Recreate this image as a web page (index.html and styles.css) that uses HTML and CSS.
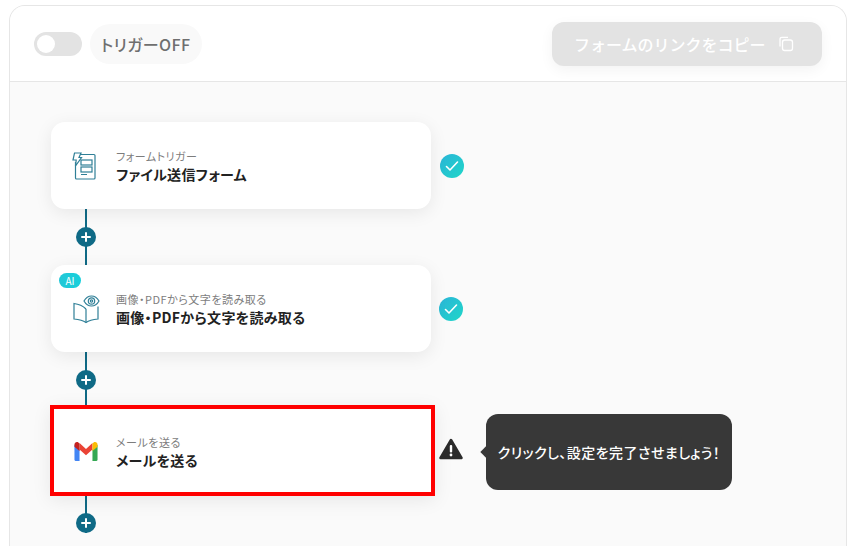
FILE: index.html
```html
<!DOCTYPE html>
<html lang="ja">
<head>
<meta charset="utf-8"/>
<meta content="width=device-width, initial-scale=1.0" name="viewport"/>
<title>フロー</title>
<link rel="stylesheet" href="styles.css">
</head>
<body>
<div class="panel">
  <div class="panel-head">
    <div class="trigger">
      <span class="switch"><span class="knob"></span></span>
      <span class="trigger-label">トリガーOFF</span>
    </div>
    <button class="copy-btn">フォームのリンクをコピー
      <svg width="16" height="16" viewBox="0 0 16 16" fill="none" stroke="#fff" stroke-width="1.3">
        <rect x="4.5" y="4" width="10" height="10.5" rx="2.2"/>
        <path d="M2 10.5V3.2C2 2 2.8 1.3 3.9 1.3H10"/>
      </svg>
    </button>
  </div>
  <div class="flow">
    <div class="step-row">
      <div class="card">
        <svg class="step-icon" width="26" height="28" viewBox="0 0 26 28" fill="none" stroke="#2f7f97" stroke-width="1.2">
          <path d="M8 2.500H22a1 1 0 0 1 1 1V26a1 1 0 0 1-1 1H4.500a1 1 0 0 1-1-1V10"/>
          <path d="M2.500 1H9L7 5.500H9.500L3.500 14L4.200 8H1Z" fill="#fff"/>
          <rect x="9" y="8" width="11" height="5"/>
          <rect x="9" y="15" width="11" height="5"/>
          <path d="M9 22.500H15"/>
        </svg>
        <div class="step-text">
          <div class="step-kind">フォームトリガー</div>
          <div class="step-name">ファイル送信フォーム</div>
        </div>
      </div>
      <span class="check">
        <svg width="14" height="12" viewBox="0 0 14 12" fill="none" stroke="#fff" stroke-width="1.6" stroke-linecap="round" stroke-linejoin="round"><path d="M1.500 6.500L5 10L12.500 2"/></svg>
      </span>
    </div>
    <div class="link"><span class="plus"></span></div>
    <div class="step-row">
      <div class="card">
        <span class="ai-badge">AI</span>
        <svg class="step-icon step-icon-wide" width="28" height="30" viewBox="0 0 28 30" fill="none" stroke="#2f7f97" stroke-width="1.2">
          <path d="M14 15C11 12 6.500 10 2 9.500V25C6.500 25.500 11 26.500 14 28.500C17 26.500 21.500 25.500 26 25V12.500"/>
          <path d="M14 15V28.500"/>
          <path d="M12 7C13.800 3.800 16.500 2 19.500 2S25.200 3.800 27 7C25.200 10.200 22.500 12 19.500 12S13.800 10.200 12 7Z" fill="#fff"/>
          <circle cx="19.500" cy="7" r="3.200"/>
          <circle cx="19.500" cy="7" r="1.200"/>
        </svg>
        <div class="step-text">
          <div class="step-kind">画像・PDFから文字を読み取る</div>
          <div class="step-name">画像・PDFから文字を読み取る</div>
        </div>
      </div>
      <span class="check check-ai">
        <svg width="14" height="12" viewBox="0 0 14 12" fill="none" stroke="#fff" stroke-width="1.6" stroke-linecap="round" stroke-linejoin="round"><path d="M1.500 6.500L5 10L12.500 2"/></svg>
      </span>
    </div>
    <div class="link"><span class="plus"></span></div>
    <div class="step-row">
      <div class="card card-alert">
        <svg class="step-icon step-icon-gmail" width="24" height="21" viewBox="0 0 26 20" preserveAspectRatio="none">
          <path d="M0.500 3.500V17.500a1.500 1.500 0 0 0 1.500 1.500H6V8Z" fill="#4285f4"/>
          <path d="M20 8V19H24a1.500 1.500 0 0 0 1.500-1.500V3.500Z" fill="#34a853"/>
          <path d="M6 8L13 13.500L20 8V2L13 7.500L6 2Z" fill="#ea4335"/>
          <path d="M0.500 3.500V5.500L6 9.500V2.500L4.500 1.300C3 0.200 0.500 1.200 0.500 3.500Z" fill="#c5221f"/>
          <path d="M20 2.500V9.500L25.500 5.500V3.500C25.500 1.200 23 0.200 21.500 1.300Z" fill="#fbbc04"/>
        </svg>
        <div class="step-text">
          <div class="step-kind">メールを送る</div>
          <div class="step-name">メールを送る</div>
        </div>
      </div>
      <svg class="warn" width="24" height="22" viewBox="0 0 24 22">
        <path d="M12 2L22.500 20H1.500Z" fill="#2b2b2b" stroke="#2b2b2b" stroke-width="2.500" stroke-linejoin="round"/>
        <rect x="10.800" y="7" width="2.400" height="7.500" rx="1" fill="#fff"/>
        <circle cx="12" cy="17" r="1.400" fill="#fff"/>
      </svg>
      <div class="tip">クリックし、設定を完了させましょう！</div>
    </div>
    <div class="link link-end"><span class="plus"></span></div>
  </div>
</div>
</body>
</html>
```

FILE: styles.css
```css
* {
  box-sizing: border-box;
}

html, body {
  height: 100%;
}

body {
  margin: 0;
  background: #fff;
  font-family: 'Noto Sans CJK JP', 'Noto Sans', sans-serif;
  overflow: hidden;
}

.panel {
  margin: 5px 11px 0 9px;
  height: 541px;
  border: 1px solid #e6e6e6;
  border-bottom: none;
  border-radius: 16px 16px 0 0;
  overflow: hidden;
  background: #fafafa;
}

.panel-head {
  height: 76px;
  background: #fff;
  border-bottom: 1px solid #e6e6e6;
  display: flex;
  justify-content: space-between;
  align-items: center;
  padding: 0 24px;
}

.trigger {
  display: flex;
  align-items: center;
  gap: 8px;
}

.switch {
  width: 48px;
  height: 24px;
  border-radius: 12px;
  background: #e3e3e3;
  padding: 3px;
  display: block;
}

.knob {
  display: block;
  width: 18px;
  height: 18px;
  border-radius: 50%;
  background: #fff;
}

.trigger-label {
  height: 40px;
  line-height: 40px;
  padding: 0 12px 0 11px;
  border-radius: 20px;
  background: #f9f9f9;
  color: #6f6f6f;
  font-size: 16px;
  font-weight: 500;
  font-feature-settings: "palt";
  letter-spacing: 0.4px;
}

.copy-btn {
  width: 270px;
  height: 44px;
  border: none;
  border-radius: 12px;
  background: #e3e3e3;
  box-shadow: 0 4px 14px rgba(0,0,0,0.05);
  color: #fff;
  font-family: inherit;
  font-size: 16px;
  font-weight: 500;
  display: flex;
  align-items: center;
  gap: 12px;
  padding: 0 0 0 22px;
}

.flow {
  padding: 40px 0 0 41px;
}

.step-row {
  display: flex;
  align-items: center;
  height: 87px;
}

.card {
  position: relative;
  width: 380px;
  height: 87px;
  background: #fff;
  border-radius: 14px;
  box-shadow: 0 4px 18px rgba(0,0,0,0.08);
  display: flex;
  align-items: center;
  padding-left: 21px;
}

.card-alert {
  flex: none;
  width: 385px;
  height: 91px;
  margin: 0 0 2px -1px;
  border: 4px solid #f00;
  border-radius: 0;
  padding: 2px 0 0 18px;
}

.step-icon {
  flex: none;
}

.step-icon-wide {
  margin-right: -2px;
}

.step-icon-gmail {
  margin-left: 2px;
}

.step-text {
  margin-left: 18px;
  font-feature-settings: "palt";
}

.step-kind {
  color: #7d7d7d;
  font-size: 11px;
  line-height: 16px;
  letter-spacing: 0.5px;
}

.step-name {
  color: #222;
  font-size: 14px;
  font-weight: 700;
  line-height: 20px;
  letter-spacing: 0.3px;
}

.ai-badge {
  position: absolute;
  left: 8px;
  top: 8px;
  width: 22px;
  height: 15px;
  border-radius: 8px;
  background: linear-gradient(90deg, #22c7d6, #17d0dc);
  color: #fff;
  font-size: 10px;
  line-height: 15px;
  text-align: center;
}

.check {
  width: 24px;
  height: 24px;
  margin-left: 9px;
  border-radius: 50%;
  background: linear-gradient(135deg, #2bb5d8, #1fd6c8);
  display: flex;
  align-items: center;
  justify-content: center;
}

.check-ai {
  margin-left: 8px;
}

.link {
  height: 56px;
  width: 2px;
  margin-left: 34px;
  background: #0f6a86;
  display: flex;
  align-items: center;
  justify-content: center;
}

.link-end {
  height: 38px;
  align-items: flex-end;
}

.plus {
  flex: none;
  position: relative;
  width: 20px;
  height: 20px;
  border-radius: 50%;
  background: #0f6a86;
}

.plus::before, .plus::after {
  content: "";
  position: absolute;
  background: #fff;
  border-radius: 1px;
}

.plus::before {
  left: 5px;
  top: 9px;
  width: 10px;
  height: 2px;
}

.plus::after {
  left: 9px;
  top: 5px;
  width: 2px;
  height: 10px;
}

.warn {
  flex: none;
  margin: 0 0 5px 4px;
}

.tip {
  flex: none;
  position: relative;
  margin-left: 23px;
  width: 246px;
  height: 76px;
  background: #383838;
  border-radius: 12px;
  color: #fff;
  font-size: 14px;
  font-weight: 500;
  font-feature-settings: "palt";
  letter-spacing: 0.45px;
  display: flex;
  align-items: center;
  justify-content: center;
}

.tip::before {
  content: "";
  position: absolute;
  left: -4px;
  top: 34px;
  width: 8px;
  height: 8px;
  background: #383838;
  transform: rotate(45deg);
}
```
